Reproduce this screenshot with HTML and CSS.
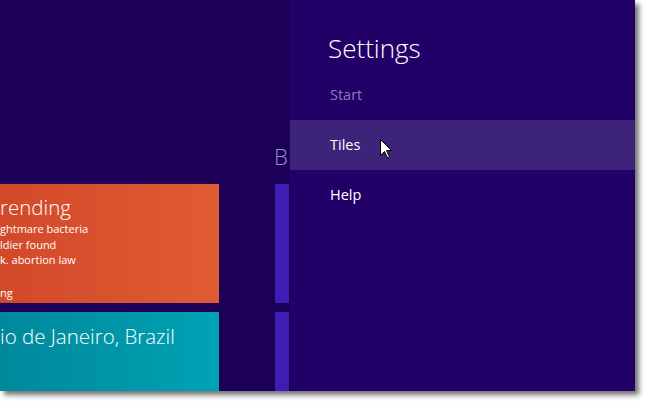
FILE: index.html
```html
<!DOCTYPE html>
<html>
<head>
<meta charset="utf-8">
<link rel="stylesheet" href="styles.css">
</head>
<body>
<div class="frame">
  <div class="start">
    <div class="col col-a">
      <div class="tile tile-news">
        <div class="tile-title">rending</div>
        <div class="tile-line">ghtmare bacteria</div>
        <div class="tile-line">ldier found</div>
        <div class="tile-line">k. abortion law</div>
        <div class="tile-line tile-foot">ng</div>
      </div>
      <div class="tile tile-travel">
        <div class="tile-title">io de Janeiro, Brazil</div>
      </div>
    </div>
    <div class="col col-b">
      <div class="group-name">B</div>
      <div class="tile tile-slim"></div>
      <div class="tile tile-slim tile-slim-2"></div>
    </div>
  </div>
  <div class="charm">
    <h1 class="charm-title">Settings</h1>
    <div class="charm-item dim">Start</div>
    <div class="charm-item hover">Tiles</div>
    <div class="charm-item">Help</div>
    <svg class="cursor" width="13" height="20" viewBox="0 0 13 20">
      <path d="M0.5 0.5 L0.5 16.5 L4.5 12.5 L7.5 19 L9.5 18 L6.5 11.5 L11.5 11.5 Z" fill="#fff" stroke="#000" stroke-width="1" stroke-linejoin="miter"/>
    </svg>
  </div>
</div>
</body>
</html>
```

FILE: styles.css
```css
html, body {
  margin: 0;
  padding: 0;
  background: #ffffff;
}
body {
  width: 650px;
  height: 406px;
  overflow: hidden;
  font-family: "Segoe UI", "Open Sans", "Noto Sans", sans-serif;
}
.frame {
  width: 635px;
  height: 391px;
  display: flex;
  background: #1c0058;
  box-shadow: 4px 4px 5px rgba(0, 0, 0, 0.55);
  position: relative;
}
.start {
  width: 290px;
  height: 391px;
  display: flex;
  overflow: hidden;
}
.col {
  display: flex;
  flex-direction: column;
  gap: 9px;
}
.col-a {
  width: 219px;
  padding-top: 184px;
}
.col-b {
  margin-left: 56px;
  width: 14px;
  padding-top: 143px;
}
.group-name {
  height: 41px;
  margin-left: -1px;
  margin-bottom: -9px;
  color: #9a8cc4;
  font-size: 22px;
  font-weight: 300;
  line-height: 26px;
}
.tile {
  flex: none;
  color: #ffffff;
  overflow: hidden;
  white-space: nowrap;
}
.tile-news {
  height: 119px;
  background: linear-gradient(to right, #d2492a, #e05b32);
  box-sizing: border-box;
  padding-top: 9px;
}
.tile-travel {
  height: 79px;
  background: linear-gradient(to right, #00889b, #00a2b4);
  box-sizing: border-box;
  padding-top: 10px;
}
.tile-title {
  font-size: 20.5px;
  font-weight: 300;
  line-height: 28px;
}
.tile-line {
  font-size: 11px;
  line-height: 15.5px;
}
.tile-foot {
  margin-top: 17px;
}
.tile-slim {
  height: 119px;
  background: #3f1db2;
}
.tile-slim-2 {
  height: 79px;
}
.charm {
  width: 345px;
  background: #220068;
  position: relative;
  padding-top: 30px;
}
.charm-title {
  margin: 0 0 4px 38px;
  color: #ffffff;
  font-size: 26px;
  font-weight: 300;
  line-height: 36px;
}
.charm-item {
  height: 50px;
  line-height: 50px;
  padding-left: 40px;
  color: #ffffff;
  font-size: 14.5px;
}
.charm-item.dim {
  color: #8b7eb6;
}
.charm-item.hover {
  background: #3d2379;
}
.cursor {
  position: absolute;
  left: 90px;
  top: 139px;
}
```
